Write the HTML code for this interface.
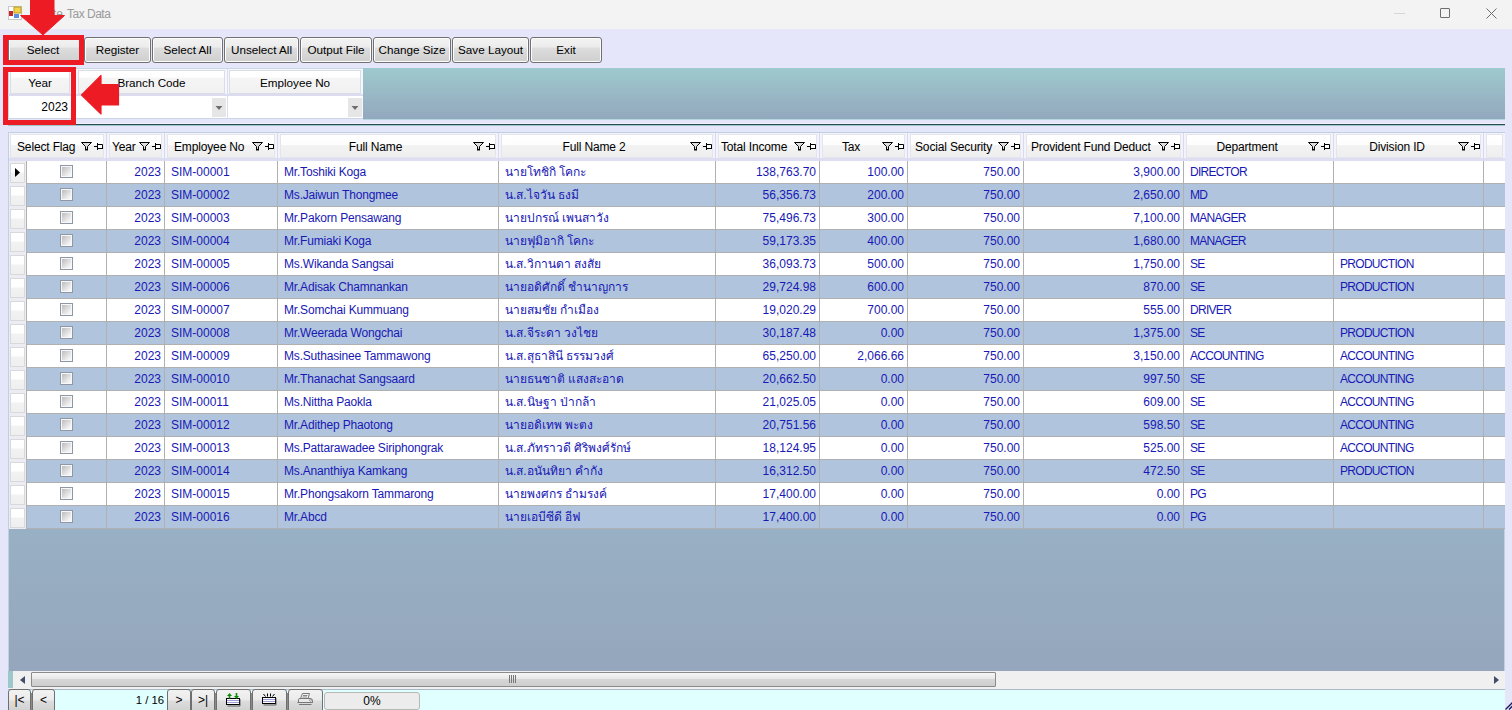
<!DOCTYPE html><html><head><meta charset="utf-8"><title>Tax Data</title><style>
*{margin:0;padding:0;box-sizing:border-box}
html,body{width:1512px;height:710px;overflow:hidden}
body{position:relative;background:#e6e6fa;font-family:"Liberation Sans",sans-serif;font-size:12px;color:#000}
.a{position:absolute}
.tb{position:absolute;top:37px;height:26px;border:1px solid #707070;border-radius:3px;
 background:linear-gradient(#f3f3f3 0%,#ececec 38%,#dddddd 42%,#cfcfcf 100%);
 text-align:center;line-height:23px;font-size:11.7px;color:#000;box-shadow:inset 0 0 0 1px #fcfcfc}
.hc{position:absolute;top:134px;height:24px;background:linear-gradient(#ffffff 0%,#fdfdfd 44%,#f2f2f2 48%,#efefef 100%);
 border:1px solid #e4e4ec}
.ht{position:absolute;top:140px;line-height:15px;font-size:12px;letter-spacing:-0.15px;color:#000;white-space:nowrap}
.r{position:absolute;height:23px;border-bottom:1px solid #b0b0b0}
.c{position:absolute;top:4px;line-height:15px;color:#1818b4;white-space:nowrap}
.cb{position:absolute;left:60px;width:13px;height:13px;border:1px solid #8f98a2;
 background:linear-gradient(135deg,#bdbdbd 10%,#f2f2f2 75%,#ffffff);box-shadow:inset 0 0 0 1px #f6f8fb}
.rh{position:absolute;left:10px;width:15px;height:20px;border:1px solid #d9d9dd;background:linear-gradient(#ffffff 0%,#fefefe 45%,#f2f2f2 50%,#efefef 100%)}
.nb{position:absolute;top:689px;height:24px;border:1px solid #707070;border-radius:3px;
 background:linear-gradient(#f2f2f2 0%,#ebebeb 45%,#dddddd 50%,#cfcfcf 100%);text-align:center;font-size:12px;line-height:20px}
</style></head><body>
<div class="a" style="left:0;top:0;width:1512px;height:29px;background:#f3f3f3"></div>
<svg class="a" style="left:8px;top:6px" width="14" height="14" viewBox="0 0 14 14"><rect x="0.5" y="0.5" width="13" height="13" fill="#fff" stroke="#c8c8c8" stroke-width="1"/><rect x="6" y="1" width="7" height="6" fill="#f5d24a" stroke="#b89a20" stroke-width="1"/><rect x="1" y="5" width="4" height="5" fill="#c0282a"/><rect x="6" y="8" width="5" height="4" fill="#5b8fe0"/></svg>
<div class="a" style="left:31px;width:32px;overflow:hidden;top:7px;font-size:12px;color:#9a9a9a;line-height:14px;white-space:nowrap;text-align:right;direction:rtl">Update</div>
<div class="a" style="left:67px;top:7px;font-size:12px;letter-spacing:-0.5px;color:#9a9a9a;line-height:14px;white-space:nowrap">Tax Data</div>
<div class="a" style="left:1394px;top:13px;width:11px;height:1px;background:#d6d6d6"></div>
<div class="a" style="left:1440px;top:8px;width:10px;height:10px;border:1px solid #6e6e6e;border-radius:1px"></div>
<svg class="a" style="left:1486px;top:8px" width="11" height="11" viewBox="0 0 11 11"><path d="M0.5 0.5L10.5 10.5M10.5 0.5L0.5 10.5" stroke="#6e6e6e" stroke-width="1"/></svg>
<div class="tb" style="left:8px;width:75px;padding-right:5px;">Select</div>
<div class="tb" style="left:84px;width:67px;">Register</div>
<div class="tb" style="left:152px;width:71px;">Select All</div>
<div class="tb" style="left:224px;width:75px;">Unselect All</div>
<div class="tb" style="left:300px;width:72px;">Output File</div>
<div class="tb" style="left:373px;width:78px;">Change Size</div>
<div class="tb" style="left:452px;width:77px;">Save Layout</div>
<div class="tb" style="left:530px;width:72px;">Exit</div>
<div class="a" style="left:8px;top:68px;width:1497px;height:51px;background:#f4f7fb;border:1px solid #c9d6e3"></div>
<div class="a" style="left:363px;top:68px;width:1142px;height:51px;background:linear-gradient(#9ec9cd,#93a8bd)"></div>
<div class="a" style="left:10px;top:70px;width:60px;height:24px;border:1px solid #ececf4;background:linear-gradient(#ffffff 0%,#fefefe 28%,#f5f5f5 33%,#f1f1f1 100%);text-align:center;line-height:24px;font-size:11.7px;border-color:#dcdce6">Year</div>
<div class="a" style="left:78px;top:70px;width:147px;height:24px;border:1px solid #ececf4;background:linear-gradient(#ffffff 0%,#fefefe 28%,#f5f5f5 33%,#f1f1f1 100%);text-align:center;line-height:24px;font-size:11.7px;border-color:#dcdce6">Branch Code</div>
<div class="a" style="left:229px;top:70px;width:132px;height:24px;border:1px solid #ececf4;background:linear-gradient(#ffffff 0%,#fefefe 28%,#f5f5f5 33%,#f1f1f1 100%);text-align:center;line-height:24px;font-size:11.7px;border-color:#dcdce6">Employee No</div>
<div class="a" style="left:8px;top:94px;width:355px;height:2px;background:#dcdcf0"></div>
<div class="a" style="left:227px;top:69px;width:1px;height:50px;background:#dcdcf0"></div>
<div class="a" style="left:72px;top:69px;width:1px;height:50px;background:#dcdcf0"></div>
<div class="a" style="left:9px;top:96px;width:62px;height:22px;background:#fff;text-align:right;padding-right:3px;line-height:22px">2023</div>
<div class="a" style="left:73px;top:96px;width:154px;height:22px;background:#fff"></div>
<div class="a" style="left:228px;top:96px;width:134px;height:22px;background:#fff"></div>
<div class="a" style="left:212px;top:98px;width:14px;height:19px;background:#e6e6e6"></div>
<svg class="a" style="left:215px;top:106px" width="8" height="5"><path d="M0.5 0H7.5L4 4Z" fill="#6e6e6e"/></svg>
<div class="a" style="left:348px;top:98px;width:14px;height:19px;background:#e6e6e6"></div>
<svg class="a" style="left:351px;top:106px" width="8" height="5"><path d="M0.5 0H7.5L4 4Z" fill="#6e6e6e"/></svg>
<div class="a" style="left:8px;top:123px;width:1497px;height:1px;background:#f0f0fc"></div>
<div class="a" style="left:8px;top:124px;width:1497px;height:1px;background:#2b4a52"></div>
<div class="a" style="left:8px;top:125px;width:1497px;height:1px;background:#9fc6ca"></div>
<div class="a" style="left:363px;top:119px;width:1142px;height:1px;background:#b4d6de"></div>
<div class="a" style="left:8px;top:132px;width:1497px;height:539px;background:linear-gradient(#9ab6c8 0px,#98b0c4 397px,#95a6bd 100%);border:1px solid #c0d0e0;border-bottom:none"></div>
<div class="a" style="left:9px;top:133px;width:1496px;height:28px;background:#f3f3fb"></div>
<div class="a" style="left:9px;top:158px;width:1496px;height:3px;background:#dedef2"></div>
<div class="hc" style="left:10px;width:94px"></div>
<div class="hc" style="left:109px;width:53px"></div>
<div class="hc" style="left:167px;width:108px"></div>
<div class="hc" style="left:280px;width:216px"></div>
<div class="hc" style="left:501px;width:212px"></div>
<div class="hc" style="left:718px;width:99px"></div>
<div class="hc" style="left:822px;width:83px"></div>
<div class="hc" style="left:910px;width:111px"></div>
<div class="hc" style="left:1026px;width:155px"></div>
<div class="hc" style="left:1186px;width:145px"></div>
<div class="hc" style="left:1336px;width:145px"></div>
<div class="hc" style="left:1486px;width:17px"></div>
<div class="ht" style="left:17px">Select Flag</div>
<div class="ht" style="left:112px">Year</div>
<div class="ht" style="left:174px">Employee No</div>
<div class="ht" style="left:278px;width:195px;text-align:center">Full Name</div>
<div class="ht" style="left:499px;width:190px;text-align:center">Full Name 2</div>
<div class="ht" style="left:721px">Total Income</div>
<div class="ht" style="left:820px;width:62px;text-align:center">Tax</div>
<div class="ht" style="left:915px">Social Security</div>
<div class="ht" style="left:1031px">Provident Fund Deduct</div>
<div class="ht" style="left:1184px;width:126px;text-align:center">Department</div>
<div class="ht" style="left:1334px;width:126px;text-align:center">Division ID</div>
<svg style="position:absolute;left:81px;top:142px" width="23" height="9" viewBox="0 0 23 9"><path d="M0.5 0.5H10.5L6.5 4.5V7.5H4.5V4.5Z" fill="#dedede" stroke="#000" stroke-width="1"/><path d="M4 7H7V8.5H4Z" fill="#000"/><path d="M13 4.5H16" stroke="#000" stroke-width="1"/><path d="M16.5 1V8" stroke="#000" stroke-width="1"/><path d="M17 2.5H21.5V6.5H17" fill="#fff" stroke="#000" stroke-width="1"/><path d="M17 6H22V7H17Z" fill="#000"/></svg>
<svg style="position:absolute;left:139px;top:142px" width="23" height="9" viewBox="0 0 23 9"><path d="M0.5 0.5H10.5L6.5 4.5V7.5H4.5V4.5Z" fill="#dedede" stroke="#000" stroke-width="1"/><path d="M4 7H7V8.5H4Z" fill="#000"/><path d="M13 4.5H16" stroke="#000" stroke-width="1"/><path d="M16.5 1V8" stroke="#000" stroke-width="1"/><path d="M17 2.5H21.5V6.5H17" fill="#fff" stroke="#000" stroke-width="1"/><path d="M17 6H22V7H17Z" fill="#000"/></svg>
<svg style="position:absolute;left:252px;top:142px" width="23" height="9" viewBox="0 0 23 9"><path d="M0.5 0.5H10.5L6.5 4.5V7.5H4.5V4.5Z" fill="#dedede" stroke="#000" stroke-width="1"/><path d="M4 7H7V8.5H4Z" fill="#000"/><path d="M13 4.5H16" stroke="#000" stroke-width="1"/><path d="M16.5 1V8" stroke="#000" stroke-width="1"/><path d="M17 2.5H21.5V6.5H17" fill="#fff" stroke="#000" stroke-width="1"/><path d="M17 6H22V7H17Z" fill="#000"/></svg>
<svg style="position:absolute;left:473px;top:142px" width="23" height="9" viewBox="0 0 23 9"><path d="M0.5 0.5H10.5L6.5 4.5V7.5H4.5V4.5Z" fill="#dedede" stroke="#000" stroke-width="1"/><path d="M4 7H7V8.5H4Z" fill="#000"/><path d="M13 4.5H16" stroke="#000" stroke-width="1"/><path d="M16.5 1V8" stroke="#000" stroke-width="1"/><path d="M17 2.5H21.5V6.5H17" fill="#fff" stroke="#000" stroke-width="1"/><path d="M17 6H22V7H17Z" fill="#000"/></svg>
<svg style="position:absolute;left:690px;top:142px" width="23" height="9" viewBox="0 0 23 9"><path d="M0.5 0.5H10.5L6.5 4.5V7.5H4.5V4.5Z" fill="#dedede" stroke="#000" stroke-width="1"/><path d="M4 7H7V8.5H4Z" fill="#000"/><path d="M13 4.5H16" stroke="#000" stroke-width="1"/><path d="M16.5 1V8" stroke="#000" stroke-width="1"/><path d="M17 2.5H21.5V6.5H17" fill="#fff" stroke="#000" stroke-width="1"/><path d="M17 6H22V7H17Z" fill="#000"/></svg>
<svg style="position:absolute;left:794px;top:142px" width="23" height="9" viewBox="0 0 23 9"><path d="M0.5 0.5H10.5L6.5 4.5V7.5H4.5V4.5Z" fill="#dedede" stroke="#000" stroke-width="1"/><path d="M4 7H7V8.5H4Z" fill="#000"/><path d="M13 4.5H16" stroke="#000" stroke-width="1"/><path d="M16.5 1V8" stroke="#000" stroke-width="1"/><path d="M17 2.5H21.5V6.5H17" fill="#fff" stroke="#000" stroke-width="1"/><path d="M17 6H22V7H17Z" fill="#000"/></svg>
<svg style="position:absolute;left:882px;top:142px" width="23" height="9" viewBox="0 0 23 9"><path d="M0.5 0.5H10.5L6.5 4.5V7.5H4.5V4.5Z" fill="#dedede" stroke="#000" stroke-width="1"/><path d="M4 7H7V8.5H4Z" fill="#000"/><path d="M13 4.5H16" stroke="#000" stroke-width="1"/><path d="M16.5 1V8" stroke="#000" stroke-width="1"/><path d="M17 2.5H21.5V6.5H17" fill="#fff" stroke="#000" stroke-width="1"/><path d="M17 6H22V7H17Z" fill="#000"/></svg>
<svg style="position:absolute;left:998px;top:142px" width="23" height="9" viewBox="0 0 23 9"><path d="M0.5 0.5H10.5L6.5 4.5V7.5H4.5V4.5Z" fill="#dedede" stroke="#000" stroke-width="1"/><path d="M4 7H7V8.5H4Z" fill="#000"/><path d="M13 4.5H16" stroke="#000" stroke-width="1"/><path d="M16.5 1V8" stroke="#000" stroke-width="1"/><path d="M17 2.5H21.5V6.5H17" fill="#fff" stroke="#000" stroke-width="1"/><path d="M17 6H22V7H17Z" fill="#000"/></svg>
<svg style="position:absolute;left:1158px;top:142px" width="23" height="9" viewBox="0 0 23 9"><path d="M0.5 0.5H10.5L6.5 4.5V7.5H4.5V4.5Z" fill="#dedede" stroke="#000" stroke-width="1"/><path d="M4 7H7V8.5H4Z" fill="#000"/><path d="M13 4.5H16" stroke="#000" stroke-width="1"/><path d="M16.5 1V8" stroke="#000" stroke-width="1"/><path d="M17 2.5H21.5V6.5H17" fill="#fff" stroke="#000" stroke-width="1"/><path d="M17 6H22V7H17Z" fill="#000"/></svg>
<svg style="position:absolute;left:1308px;top:142px" width="23" height="9" viewBox="0 0 23 9"><path d="M0.5 0.5H10.5L6.5 4.5V7.5H4.5V4.5Z" fill="#dedede" stroke="#000" stroke-width="1"/><path d="M4 7H7V8.5H4Z" fill="#000"/><path d="M13 4.5H16" stroke="#000" stroke-width="1"/><path d="M16.5 1V8" stroke="#000" stroke-width="1"/><path d="M17 2.5H21.5V6.5H17" fill="#fff" stroke="#000" stroke-width="1"/><path d="M17 6H22V7H17Z" fill="#000"/></svg>
<svg style="position:absolute;left:1458px;top:142px" width="23" height="9" viewBox="0 0 23 9"><path d="M0.5 0.5H10.5L6.5 4.5V7.5H4.5V4.5Z" fill="#dedede" stroke="#000" stroke-width="1"/><path d="M4 7H7V8.5H4Z" fill="#000"/><path d="M13 4.5H16" stroke="#000" stroke-width="1"/><path d="M16.5 1V8" stroke="#000" stroke-width="1"/><path d="M17 2.5H21.5V6.5H17" fill="#fff" stroke="#000" stroke-width="1"/><path d="M17 6H22V7H17Z" fill="#000"/></svg>
<div class="a" style="left:106px;top:133px;width:1px;height:28px;background:#d8d8ee"></div>
<div class="a" style="left:164px;top:133px;width:1px;height:28px;background:#d8d8ee"></div>
<div class="a" style="left:277px;top:133px;width:1px;height:28px;background:#d8d8ee"></div>
<div class="a" style="left:498px;top:133px;width:1px;height:28px;background:#d8d8ee"></div>
<div class="a" style="left:715px;top:133px;width:1px;height:28px;background:#d8d8ee"></div>
<div class="a" style="left:819px;top:133px;width:1px;height:28px;background:#d8d8ee"></div>
<div class="a" style="left:907px;top:133px;width:1px;height:28px;background:#d8d8ee"></div>
<div class="a" style="left:1023px;top:133px;width:1px;height:28px;background:#d8d8ee"></div>
<div class="a" style="left:1183px;top:133px;width:1px;height:28px;background:#d8d8ee"></div>
<div class="a" style="left:1333px;top:133px;width:1px;height:28px;background:#d8d8ee"></div>
<div class="a" style="left:1483px;top:133px;width:1px;height:28px;background:#d8d8ee"></div>
<div class="r" style="left:27px;top:161px;width:1478px;background:#ffffff">
<div class="c" style="left:80px;width:54px;text-align:right">2023</div>
<div class="c" style="left:144px">SIM-00001</div>
<div class="c" style="left:257px;letter-spacing:-0.18px">Mr.Toshiki Koga</div>
<div class="c" style="left:478px">นายโทชิกิ โคกะ</div>
<div class="c" style="left:689px;width:100px;text-align:right">138,763.70</div>
<div class="c" style="left:793px;width:84px;text-align:right">100.00</div>
<div class="c" style="left:881px;width:112px;text-align:right">750.00</div>
<div class="c" style="left:997px;width:156px;text-align:right">3,900.00</div>
<div class="c" style="left:1163px;letter-spacing:-0.7px">DIRECTOR</div>
<div class="c" style="left:1313px"></div>
</div>
<div class="cb" style="top:165px"></div>
<div class="a" style="left:9px;top:161px;width:18px;height:23px;background:#ececf2"></div>
<div class="rh" style="top:163px"></div>
<div class="r" style="left:27px;top:184px;width:1478px;background:#b0c4de">
<div class="c" style="left:80px;width:54px;text-align:right">2023</div>
<div class="c" style="left:144px">SIM-00002</div>
<div class="c" style="left:257px;letter-spacing:-0.18px">Ms.Jaiwun Thongmee</div>
<div class="c" style="left:478px">น.ส.ไจวัน ธงมี</div>
<div class="c" style="left:689px;width:100px;text-align:right">56,356.73</div>
<div class="c" style="left:793px;width:84px;text-align:right">200.00</div>
<div class="c" style="left:881px;width:112px;text-align:right">750.00</div>
<div class="c" style="left:997px;width:156px;text-align:right">2,650.00</div>
<div class="c" style="left:1163px;letter-spacing:-0.7px">MD</div>
<div class="c" style="left:1313px"></div>
</div>
<div class="cb" style="top:188px"></div>
<div class="a" style="left:9px;top:184px;width:18px;height:23px;background:#ececf2"></div>
<div class="rh" style="top:186px"></div>
<div class="r" style="left:27px;top:207px;width:1478px;background:#ffffff">
<div class="c" style="left:80px;width:54px;text-align:right">2023</div>
<div class="c" style="left:144px">SIM-00003</div>
<div class="c" style="left:257px;letter-spacing:-0.18px">Mr.Pakorn Pensawang</div>
<div class="c" style="left:478px">นายปกรณ์ เพนสาวัง</div>
<div class="c" style="left:689px;width:100px;text-align:right">75,496.73</div>
<div class="c" style="left:793px;width:84px;text-align:right">300.00</div>
<div class="c" style="left:881px;width:112px;text-align:right">750.00</div>
<div class="c" style="left:997px;width:156px;text-align:right">7,100.00</div>
<div class="c" style="left:1163px;letter-spacing:-0.7px">MANAGER</div>
<div class="c" style="left:1313px"></div>
</div>
<div class="cb" style="top:211px"></div>
<div class="a" style="left:9px;top:207px;width:18px;height:23px;background:#ececf2"></div>
<div class="rh" style="top:209px"></div>
<div class="r" style="left:27px;top:230px;width:1478px;background:#b0c4de">
<div class="c" style="left:80px;width:54px;text-align:right">2023</div>
<div class="c" style="left:144px">SIM-00004</div>
<div class="c" style="left:257px;letter-spacing:-0.18px">Mr.Fumiaki Koga</div>
<div class="c" style="left:478px">นายฟุมิอากิ โคกะ</div>
<div class="c" style="left:689px;width:100px;text-align:right">59,173.35</div>
<div class="c" style="left:793px;width:84px;text-align:right">400.00</div>
<div class="c" style="left:881px;width:112px;text-align:right">750.00</div>
<div class="c" style="left:997px;width:156px;text-align:right">1,680.00</div>
<div class="c" style="left:1163px;letter-spacing:-0.7px">MANAGER</div>
<div class="c" style="left:1313px"></div>
</div>
<div class="cb" style="top:234px"></div>
<div class="a" style="left:9px;top:230px;width:18px;height:23px;background:#ececf2"></div>
<div class="rh" style="top:232px"></div>
<div class="r" style="left:27px;top:253px;width:1478px;background:#ffffff">
<div class="c" style="left:80px;width:54px;text-align:right">2023</div>
<div class="c" style="left:144px">SIM-00005</div>
<div class="c" style="left:257px;letter-spacing:-0.18px">Ms.Wikanda Sangsai</div>
<div class="c" style="left:478px">น.ส.วิกานดา สงสัย</div>
<div class="c" style="left:689px;width:100px;text-align:right">36,093.73</div>
<div class="c" style="left:793px;width:84px;text-align:right">500.00</div>
<div class="c" style="left:881px;width:112px;text-align:right">750.00</div>
<div class="c" style="left:997px;width:156px;text-align:right">1,750.00</div>
<div class="c" style="left:1163px;letter-spacing:-0.7px">SE</div>
<div class="c" style="left:1313px;letter-spacing:-0.7px">PRODUCTION</div>
</div>
<div class="cb" style="top:257px"></div>
<div class="a" style="left:9px;top:253px;width:18px;height:23px;background:#ececf2"></div>
<div class="rh" style="top:255px"></div>
<div class="r" style="left:27px;top:276px;width:1478px;background:#b0c4de">
<div class="c" style="left:80px;width:54px;text-align:right">2023</div>
<div class="c" style="left:144px">SIM-00006</div>
<div class="c" style="left:257px;letter-spacing:-0.18px">Mr.Adisak Chamnankan</div>
<div class="c" style="left:478px">นายอดิศักดิ์ ชำนาญการ</div>
<div class="c" style="left:689px;width:100px;text-align:right">29,724.98</div>
<div class="c" style="left:793px;width:84px;text-align:right">600.00</div>
<div class="c" style="left:881px;width:112px;text-align:right">750.00</div>
<div class="c" style="left:997px;width:156px;text-align:right">870.00</div>
<div class="c" style="left:1163px;letter-spacing:-0.7px">SE</div>
<div class="c" style="left:1313px;letter-spacing:-0.7px">PRODUCTION</div>
</div>
<div class="cb" style="top:280px"></div>
<div class="a" style="left:9px;top:276px;width:18px;height:23px;background:#ececf2"></div>
<div class="rh" style="top:278px"></div>
<div class="r" style="left:27px;top:299px;width:1478px;background:#ffffff">
<div class="c" style="left:80px;width:54px;text-align:right">2023</div>
<div class="c" style="left:144px">SIM-00007</div>
<div class="c" style="left:257px;letter-spacing:-0.18px">Mr.Somchai Kummuang</div>
<div class="c" style="left:478px">นายสมชัย กำเมือง</div>
<div class="c" style="left:689px;width:100px;text-align:right">19,020.29</div>
<div class="c" style="left:793px;width:84px;text-align:right">700.00</div>
<div class="c" style="left:881px;width:112px;text-align:right">750.00</div>
<div class="c" style="left:997px;width:156px;text-align:right">555.00</div>
<div class="c" style="left:1163px;letter-spacing:-0.7px">DRIVER</div>
<div class="c" style="left:1313px"></div>
</div>
<div class="cb" style="top:303px"></div>
<div class="a" style="left:9px;top:299px;width:18px;height:23px;background:#ececf2"></div>
<div class="rh" style="top:301px"></div>
<div class="r" style="left:27px;top:322px;width:1478px;background:#b0c4de">
<div class="c" style="left:80px;width:54px;text-align:right">2023</div>
<div class="c" style="left:144px">SIM-00008</div>
<div class="c" style="left:257px;letter-spacing:-0.18px">Mr.Weerada Wongchai</div>
<div class="c" style="left:478px">น.ส.จีระดา วงไชย</div>
<div class="c" style="left:689px;width:100px;text-align:right">30,187.48</div>
<div class="c" style="left:793px;width:84px;text-align:right">0.00</div>
<div class="c" style="left:881px;width:112px;text-align:right">750.00</div>
<div class="c" style="left:997px;width:156px;text-align:right">1,375.00</div>
<div class="c" style="left:1163px;letter-spacing:-0.7px">SE</div>
<div class="c" style="left:1313px;letter-spacing:-0.7px">PRODUCTION</div>
</div>
<div class="cb" style="top:326px"></div>
<div class="a" style="left:9px;top:322px;width:18px;height:23px;background:#ececf2"></div>
<div class="rh" style="top:324px"></div>
<div class="r" style="left:27px;top:345px;width:1478px;background:#ffffff">
<div class="c" style="left:80px;width:54px;text-align:right">2023</div>
<div class="c" style="left:144px">SIM-00009</div>
<div class="c" style="left:257px;letter-spacing:-0.18px">Ms.Suthasinee Tammawong</div>
<div class="c" style="left:478px">น.ส.สุธาสินี ธรรมวงศ์</div>
<div class="c" style="left:689px;width:100px;text-align:right">65,250.00</div>
<div class="c" style="left:793px;width:84px;text-align:right">2,066.66</div>
<div class="c" style="left:881px;width:112px;text-align:right">750.00</div>
<div class="c" style="left:997px;width:156px;text-align:right">3,150.00</div>
<div class="c" style="left:1163px;letter-spacing:-0.7px">ACCOUNTING</div>
<div class="c" style="left:1313px;letter-spacing:-0.7px">ACCOUNTING</div>
</div>
<div class="cb" style="top:349px"></div>
<div class="a" style="left:9px;top:345px;width:18px;height:23px;background:#ececf2"></div>
<div class="rh" style="top:347px"></div>
<div class="r" style="left:27px;top:368px;width:1478px;background:#b0c4de">
<div class="c" style="left:80px;width:54px;text-align:right">2023</div>
<div class="c" style="left:144px">SIM-00010</div>
<div class="c" style="left:257px;letter-spacing:-0.18px">Mr.Thanachat Sangsaard</div>
<div class="c" style="left:478px">นายธนชาติ แสงสะอาด</div>
<div class="c" style="left:689px;width:100px;text-align:right">20,662.50</div>
<div class="c" style="left:793px;width:84px;text-align:right">0.00</div>
<div class="c" style="left:881px;width:112px;text-align:right">750.00</div>
<div class="c" style="left:997px;width:156px;text-align:right">997.50</div>
<div class="c" style="left:1163px;letter-spacing:-0.7px">SE</div>
<div class="c" style="left:1313px;letter-spacing:-0.7px">ACCOUNTING</div>
</div>
<div class="cb" style="top:372px"></div>
<div class="a" style="left:9px;top:368px;width:18px;height:23px;background:#ececf2"></div>
<div class="rh" style="top:370px"></div>
<div class="r" style="left:27px;top:391px;width:1478px;background:#ffffff">
<div class="c" style="left:80px;width:54px;text-align:right">2023</div>
<div class="c" style="left:144px">SIM-00011</div>
<div class="c" style="left:257px;letter-spacing:-0.18px">Ms.Nittha Paokla</div>
<div class="c" style="left:478px">น.ส.นิษฐา ป่ากล้า</div>
<div class="c" style="left:689px;width:100px;text-align:right">21,025.05</div>
<div class="c" style="left:793px;width:84px;text-align:right">0.00</div>
<div class="c" style="left:881px;width:112px;text-align:right">750.00</div>
<div class="c" style="left:997px;width:156px;text-align:right">609.00</div>
<div class="c" style="left:1163px;letter-spacing:-0.7px">SE</div>
<div class="c" style="left:1313px;letter-spacing:-0.7px">ACCOUNTING</div>
</div>
<div class="cb" style="top:395px"></div>
<div class="a" style="left:9px;top:391px;width:18px;height:23px;background:#ececf2"></div>
<div class="rh" style="top:393px"></div>
<div class="r" style="left:27px;top:414px;width:1478px;background:#b0c4de">
<div class="c" style="left:80px;width:54px;text-align:right">2023</div>
<div class="c" style="left:144px">SIM-00012</div>
<div class="c" style="left:257px;letter-spacing:-0.18px">Mr.Adithep Phaotong</div>
<div class="c" style="left:478px">นายอดิเทพ พะตง</div>
<div class="c" style="left:689px;width:100px;text-align:right">20,751.56</div>
<div class="c" style="left:793px;width:84px;text-align:right">0.00</div>
<div class="c" style="left:881px;width:112px;text-align:right">750.00</div>
<div class="c" style="left:997px;width:156px;text-align:right">598.50</div>
<div class="c" style="left:1163px;letter-spacing:-0.7px">SE</div>
<div class="c" style="left:1313px;letter-spacing:-0.7px">ACCOUNTING</div>
</div>
<div class="cb" style="top:418px"></div>
<div class="a" style="left:9px;top:414px;width:18px;height:23px;background:#ececf2"></div>
<div class="rh" style="top:416px"></div>
<div class="r" style="left:27px;top:437px;width:1478px;background:#ffffff">
<div class="c" style="left:80px;width:54px;text-align:right">2023</div>
<div class="c" style="left:144px">SIM-00013</div>
<div class="c" style="left:257px;letter-spacing:-0.18px">Ms.Pattarawadee Siriphongrak</div>
<div class="c" style="left:478px">น.ส.ภัทราวดี ศิริพงศ์รักษ์</div>
<div class="c" style="left:689px;width:100px;text-align:right">18,124.95</div>
<div class="c" style="left:793px;width:84px;text-align:right">0.00</div>
<div class="c" style="left:881px;width:112px;text-align:right">750.00</div>
<div class="c" style="left:997px;width:156px;text-align:right">525.00</div>
<div class="c" style="left:1163px;letter-spacing:-0.7px">SE</div>
<div class="c" style="left:1313px;letter-spacing:-0.7px">ACCOUNTING</div>
</div>
<div class="cb" style="top:441px"></div>
<div class="a" style="left:9px;top:437px;width:18px;height:23px;background:#ececf2"></div>
<div class="rh" style="top:439px"></div>
<div class="r" style="left:27px;top:460px;width:1478px;background:#b0c4de">
<div class="c" style="left:80px;width:54px;text-align:right">2023</div>
<div class="c" style="left:144px">SIM-00014</div>
<div class="c" style="left:257px;letter-spacing:-0.18px">Ms.Ananthiya Kamkang</div>
<div class="c" style="left:478px">น.ส.อนันทิยา คำกัง</div>
<div class="c" style="left:689px;width:100px;text-align:right">16,312.50</div>
<div class="c" style="left:793px;width:84px;text-align:right">0.00</div>
<div class="c" style="left:881px;width:112px;text-align:right">750.00</div>
<div class="c" style="left:997px;width:156px;text-align:right">472.50</div>
<div class="c" style="left:1163px;letter-spacing:-0.7px">SE</div>
<div class="c" style="left:1313px;letter-spacing:-0.7px">PRODUCTION</div>
</div>
<div class="cb" style="top:464px"></div>
<div class="a" style="left:9px;top:460px;width:18px;height:23px;background:#ececf2"></div>
<div class="rh" style="top:462px"></div>
<div class="r" style="left:27px;top:483px;width:1478px;background:#ffffff">
<div class="c" style="left:80px;width:54px;text-align:right">2023</div>
<div class="c" style="left:144px">SIM-00015</div>
<div class="c" style="left:257px;letter-spacing:-0.18px">Mr.Phongsakorn Tammarong</div>
<div class="c" style="left:478px">นายพงศกร ธำมรงค์</div>
<div class="c" style="left:689px;width:100px;text-align:right">17,400.00</div>
<div class="c" style="left:793px;width:84px;text-align:right">0.00</div>
<div class="c" style="left:881px;width:112px;text-align:right">750.00</div>
<div class="c" style="left:997px;width:156px;text-align:right">0.00</div>
<div class="c" style="left:1163px;letter-spacing:-0.7px">PG</div>
<div class="c" style="left:1313px"></div>
</div>
<div class="cb" style="top:487px"></div>
<div class="a" style="left:9px;top:483px;width:18px;height:23px;background:#ececf2"></div>
<div class="rh" style="top:485px"></div>
<div class="r" style="left:27px;top:506px;width:1478px;background:#b0c4de">
<div class="c" style="left:80px;width:54px;text-align:right">2023</div>
<div class="c" style="left:144px">SIM-00016</div>
<div class="c" style="left:257px;letter-spacing:-0.18px">Mr.Abcd</div>
<div class="c" style="left:478px">นายเอบีซีดี อีฟ</div>
<div class="c" style="left:689px;width:100px;text-align:right">17,400.00</div>
<div class="c" style="left:793px;width:84px;text-align:right">0.00</div>
<div class="c" style="left:881px;width:112px;text-align:right">750.00</div>
<div class="c" style="left:997px;width:156px;text-align:right">0.00</div>
<div class="c" style="left:1163px;letter-spacing:-0.7px">PG</div>
<div class="c" style="left:1313px"></div>
</div>
<div class="cb" style="top:510px"></div>
<div class="a" style="left:9px;top:506px;width:18px;height:23px;background:#ececf2"></div>
<div class="rh" style="top:508px"></div>
<div class="a" style="left:106px;top:161px;width:1px;height:368px;background:#b0b0b0"></div>
<div class="a" style="left:164px;top:161px;width:1px;height:368px;background:#b0b0b0"></div>
<div class="a" style="left:277px;top:161px;width:1px;height:368px;background:#b0b0b0"></div>
<div class="a" style="left:498px;top:161px;width:1px;height:368px;background:#b0b0b0"></div>
<div class="a" style="left:715px;top:161px;width:1px;height:368px;background:#b0b0b0"></div>
<div class="a" style="left:819px;top:161px;width:1px;height:368px;background:#b0b0b0"></div>
<div class="a" style="left:907px;top:161px;width:1px;height:368px;background:#b0b0b0"></div>
<div class="a" style="left:1023px;top:161px;width:1px;height:368px;background:#b0b0b0"></div>
<div class="a" style="left:1183px;top:161px;width:1px;height:368px;background:#b0b0b0"></div>
<div class="a" style="left:1333px;top:161px;width:1px;height:368px;background:#b0b0b0"></div>
<div class="a" style="left:1483px;top:161px;width:1px;height:368px;background:#b0b0b0"></div>
<div class="a" style="left:26px;top:161px;width:1px;height:368px;background:#b0b0b0"></div>
<svg class="a" style="left:15px;top:168px" width="6" height="9"><path d="M0 0L5 4.5L0 9Z" fill="#000"/></svg>
<div class="a" style="left:8px;top:671px;width:1497px;height:18px;background:#f0f0f0"></div>
<div class="a" style="left:8px;top:671px;width:5px;height:17px;background:#9cc8cc"></div>
<svg class="a" style="left:20px;top:676px" width="5" height="8"><path d="M5 0L0 4L5 8Z" fill="#454a6a"/></svg>
<svg class="a" style="left:1494px;top:676px" width="5" height="8"><path d="M0 0L5 4L0 8Z" fill="#454a6a"/></svg>
<div class="a" style="left:31px;top:672px;width:965px;height:15px;border:1px solid #8a8a8a;border-radius:1px;background:linear-gradient(#f6f6f6 0%,#e8e8e8 45%,#d6d6d6 50%,#cdcdcd 100%)"></div>
<div class="a" style="left:509px;top:675px;width:8px;height:8px;background:repeating-linear-gradient(90deg,#777 0 1px,transparent 1px 2px)"></div>
<div class="a" style="left:8px;top:689px;width:1497px;height:21px;background:#e0ffff;border-top:1px solid #a8b8c8"></div>
<div class="a" style="left:8px;top:693px;width:47px;height:17px;background:#8a8a8a"></div>
<div class="a" style="left:167px;top:693px;width:156px;height:17px;background:#8a8a8a"></div>
<div class="nb" style="left:8px;width:23px">|&lt;</div>
<div class="nb" style="left:32px;width:23px">&lt;</div>
<div class="nb" style="left:167px;width:24px">&gt;</div>
<div class="nb" style="left:191px;width:24px">&gt;|</div>
<div class="nb" style="left:216px;width:35px"></div>
<div class="nb" style="left:252px;width:35px"></div>
<div class="nb" style="left:288px;width:35px"></div>
<div class="a" style="left:55px;top:690px;width:112px;height:20px;text-align:right;padding-right:3px;line-height:20px;font-size:11.3px;color:#000">1 / 16</div>
<div class="a" style="left:324px;top:692px;width:96px;height:18px;border:1px solid #b8b8b8;border-radius:3px;background:#ececec;text-align:center;line-height:16px">0%</div>
<svg class="a" style="left:224px;top:690px" width="18" height="17"><rect x="2.5" y="8.5" width="13" height="6" fill="#fff" stroke="#000"/><path d="M3 10.5H15M3 12.5H15" stroke="#9c9cd8"/><path d="M16 9V16H3.5" stroke="#444" fill="none" stroke-width="0.8"/><path d="M3 6L5.5 3L8 6H6.3V8.5H4.7V6Z" fill="#0a8a0a"/><path d="M10 6L12.5 9L15 6H13.3V3H11.7V6Z" fill="#0a8a0a"/></svg>
<svg class="a" style="left:260px;top:690px" width="18" height="17"><rect x="2.5" y="7.5" width="13" height="6" fill="#fff" stroke="#000"/><path d="M3 9.5H15M3 11.5H15" stroke="#9c9cd8"/><path d="M16 8V15H3.5" stroke="#444" fill="none" stroke-width="0.8"/><path d="M3.5 4L5.5 6.5M7.5 3.5V6.5M10.5 3.5V6.5M14.5 4L12.5 6.5" stroke="#000" stroke-width="1"/></svg>
<svg class="a" style="left:296px;top:690px" width="18" height="17"><path d="M6.5 3.5H13.5L12 8.5H4.5Z" fill="#f4f4f4" stroke="#777"/><path d="M7 5.5H11.5M6.5 7H11" stroke="#888"/><path d="M2.5 9.5Q2.5 8.5 4 8.5H14Q16.5 8.5 16.5 10.5V12.5H2.5Z" fill="#e8e8e8" stroke="#777"/><path d="M1.5 12.5H16.5M3 14.5H15.5" stroke="#777"/><circle cx="14.5" cy="10.3" r="1" fill="none" stroke="#888" stroke-width="0.7"/></svg>
<svg class="a" style="left:1500px;top:698px" width="12" height="12"><path d="M12.5 4.5L5.5 11.5M12.5 8L9 11.5" stroke="#1a1a5a" stroke-width="1.3"/></svg>
<div class="a" style="left:3px;top:35px;width:81px;height:30px;border:5px solid #ed1c24"></div>
<div class="a" style="left:3px;top:67px;width:73px;height:58px;border:5px solid #ed1c24"></div>
<svg class="a" style="left:0;top:0" width="130" height="130"><path d="M30.5 -2H54V15.5H64.5L43 35L20.5 15.5H30.5Z" fill="#ed1c24" stroke="#ed1c24" stroke-width="1" stroke-linejoin="round"/><path d="M81.5 95L101 75.5V84.5H118.5V105H101V114Z" fill="#ed1c24" stroke="#ed1c24" stroke-width="1.2" stroke-linejoin="round"/></svg>
</body></html>
